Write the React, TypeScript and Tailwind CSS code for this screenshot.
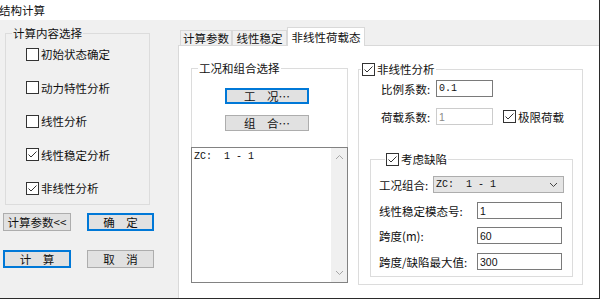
import type { ReactNode } from 'react';

const cjk = "font-['Noto_Sans_CJK_SC',sans-serif] text-[11.5px] leading-[14px] text-[#111]";
const mono = "font-['Liberation_Mono',monospace] text-[10px] whitespace-pre";

function Check({ checked }: { checked?: boolean }) {
  return (
    <span className="flex h-[13px] w-[13px] shrink-0 items-center justify-center border border-[#333] bg-white">
      {checked && (
        <svg width="11" height="11" viewBox="0 0 11 11">
          <path d="M1.5 5.5 L4 8 L9.5 2.5" fill="none" stroke="#333" strokeWidth="1" />
        </svg>
      )}
    </span>
  );
}

function Box({ checked, children }: { checked?: boolean; children: ReactNode }) {
  return (
    <div className="flex h-[14px] items-center gap-[2px]">
      <Check checked={checked} />
      <span>{children}</span>
    </div>
  );
}

function Btn({ w, h, focus, children }: { w: string; h: string; focus?: boolean; children: ReactNode }) {
  return (
    <div
      className={`${w} ${h} flex items-center justify-center bg-[#e1e1e1] ${
        focus ? 'border-2 border-[#0078d7]' : 'border border-[#adadad]'
      }`}
    >
      {children}
    </div>
  );
}

function Tab({ w, active, children }: { w: string; active?: boolean; children: ReactNode }) {
  return (
    <div
      className={`${w} flex items-center justify-center border-l border-r border-t border-[#d9d9d9] ${
        active ? 'relative z-10 -mb-px h-[19px] bg-white' : 'h-[15px] bg-[#f0f0f0]'
      }`}
    >
      {children}
    </div>
  );
}

function Input({ w, value, disabled, m }: { w: string; value: string; disabled?: boolean; m?: boolean }) {
  return (
    <div
      className={`${w} flex h-[17px] items-center bg-white pl-[2px] ${
        disabled ? 'border border-[#cccccc] text-[#8a8a8a]' : 'border border-[#7a7a7a] text-[#111]'
      } ${m ? mono : "font-['Liberation_Sans',sans-serif] text-[10.5px]"}`}
    >
      {value}
    </div>
  );
}

export default function App() {
  return (
    <div className={`flex h-[299px] w-[600px] flex-col overflow-hidden border-b border-r border-[#2b2b2b] bg-[#f0f0f0] ${cjk}`}>
      {/* 标题栏 */}
      <div className="flex h-[20px] shrink-0 items-center bg-white">
        <span className="-ml-[1px]">结构计算</span>
      </div>

      <div className="flex flex-1">
        {/* 左侧 */}
        <div className="flex w-[178px] shrink-0 flex-col">
          <fieldset className="ml-[5px] mt-[6px] w-[145px] border border-[#dcdcdc]">
            <legend className="ml-[6px] h-[14px] px-[1px]">计算内容选择</legend>
            <div className="flex flex-col gap-[19.5px] pb-[9px] pl-[20px] pt-[7px]">
              <Box>初始状态确定</Box>
              <Box>动力特性分析</Box>
              <Box>线性分析</Box>
              <Box checked>线性稳定分析</Box>
              <Box checked>非线性分析</Box>
            </div>
          </fieldset>

          <div className="ml-[3px] mt-[8px] flex gap-[16px]">
            <Btn w="w-[68px]" h="h-[18px]">计算参数&lt;&lt;</Btn>
            <Btn w="w-[67px]" h="h-[18px]" focus>确　定</Btn>
          </div>
          <div className="ml-[3px] mt-[19px] flex gap-[16px]">
            <Btn w="w-[68px]" h="h-[18px]" focus>计　算</Btn>
            <Btn w="w-[67px]" h="h-[18px]">取　消</Btn>
          </div>
        </div>

        {/* 右侧选项卡 */}
        <div className="flex flex-1 flex-col">
          <div className="flex h-[25px] shrink-0 items-end pl-[2px]">
            <Tab w="w-[52px]">计算参数</Tab>
            <Tab w="w-[55px]">线性稳定</Tab>
            <Tab w="w-[78px]" active>非线性荷载态</Tab>
          </div>

          <div className="flex flex-1 border-l border-t border-[#d9d9d9] bg-white">
            {/* 工况和组合选择 */}
            <div className="ml-[12px] mt-[15px] flex w-[157px] flex-col">
              <fieldset className="border border-b-0 border-[#dcdcdc]">
                <legend className="ml-[6px] h-[14px] px-[1px]">工况和组合选择</legend>
                <div className="flex flex-col gap-[11px] pb-[16px] pl-[33px] pt-[13px]">
                  <Btn w="w-[84px]" h="h-[16px]" focus>工　况…</Btn>
                  <Btn w="w-[84px]" h="h-[16px]">组　合…</Btn>
                </div>
              </fieldset>
              <div className="flex h-[136px] border border-[#828282]">
                <div className={`flex-1 pl-[2px] pt-[3px] ${mono} leading-[12px] text-[#111]`}>ZC:  1 - 1</div>
                <div className="flex w-[16px] flex-col items-center justify-between bg-[#f0f0f0] py-[6px]">
                  <svg width="9" height="6" viewBox="0 0 9 6">
                    <path d="M1 5 L4.5 1.5 L8 5" fill="none" stroke="#a6a6a6" strokeWidth="1" />
                  </svg>
                  <svg width="9" height="6" viewBox="0 0 9 6">
                    <path d="M1 1 L4.5 4.5 L8 1" fill="none" stroke="#a6a6a6" strokeWidth="1" />
                  </svg>
                </div>
              </div>
            </div>

            {/* 非线性分析 */}
            <div className="ml-[10px] mt-[16px] w-[225px]">
              <fieldset className="border border-[#dcdcdc]">
                <legend className="ml-[2px] h-[14px] px-[1px]">
                  <Box checked>非线性分析</Box>
                </legend>
                <div className="flex flex-col pb-[7px] pt-[4px]">
                  <div className="flex h-[17px] items-center pl-[22px]">
                    <span className="w-[55px]">比例系数:</span>
                    <Input w="w-[57px]" value="0.1" m />
                  </div>
                  <div className="mt-[11px] flex h-[17px] items-center pl-[22px]">
                    <span className="w-[55px]">荷载系数:</span>
                    <Input w="w-[57px]" value="1" disabled />
                    <div className="ml-[10px]">
                      <Box checked>极限荷载</Box>
                    </div>
                  </div>

                  <fieldset className="ml-[11px] mt-[27px] w-[203px] border border-[#dcdcdc]">
                    <legend className="ml-[14px] h-[14px] px-[1px]">
                      <Box checked>考虑缺陷</Box>
                    </legend>
                    <div className="flex flex-col pb-[6px] pl-[8px] pt-[10px]">
                      <div className="flex h-[17px] items-center">
                        <span className="w-[54px]">工况组合:</span>
                        <div className="flex h-[17px] w-[131px] items-center justify-between border border-[#adadad] bg-[#e5e5e5] pl-[2px] pr-[5px]">
                          <span className={`${mono} text-[#111]`}>ZC:  1 - 1</span>
                          <svg width="9" height="6" viewBox="0 0 9 6">
                            <path d="M1 1 L4.5 4.5 L8 1" fill="none" stroke="#444" strokeWidth="1" />
                          </svg>
                        </div>
                      </div>
                      <div className="mt-[9px] flex h-[17px] items-center">
                        <span className="w-[98px]">线性稳定模态号:</span>
                        <Input w="w-[85px]" value="1" />
                      </div>
                      <div className="mt-[8px] flex h-[17px] items-center">
                        <span className="w-[98px]">跨度(m):</span>
                        <Input w="w-[85px]" value="60" />
                      </div>
                      <div className="mt-[9px] flex h-[17px] items-center">
                        <span className="w-[98px]">跨度/缺陷最大值:</span>
                        <Input w="w-[85px]" value="300" />
                      </div>
                    </div>
                  </fieldset>
                </div>
              </fieldset>
            </div>
          </div>
        </div>
      </div>
    </div>
  );
}
